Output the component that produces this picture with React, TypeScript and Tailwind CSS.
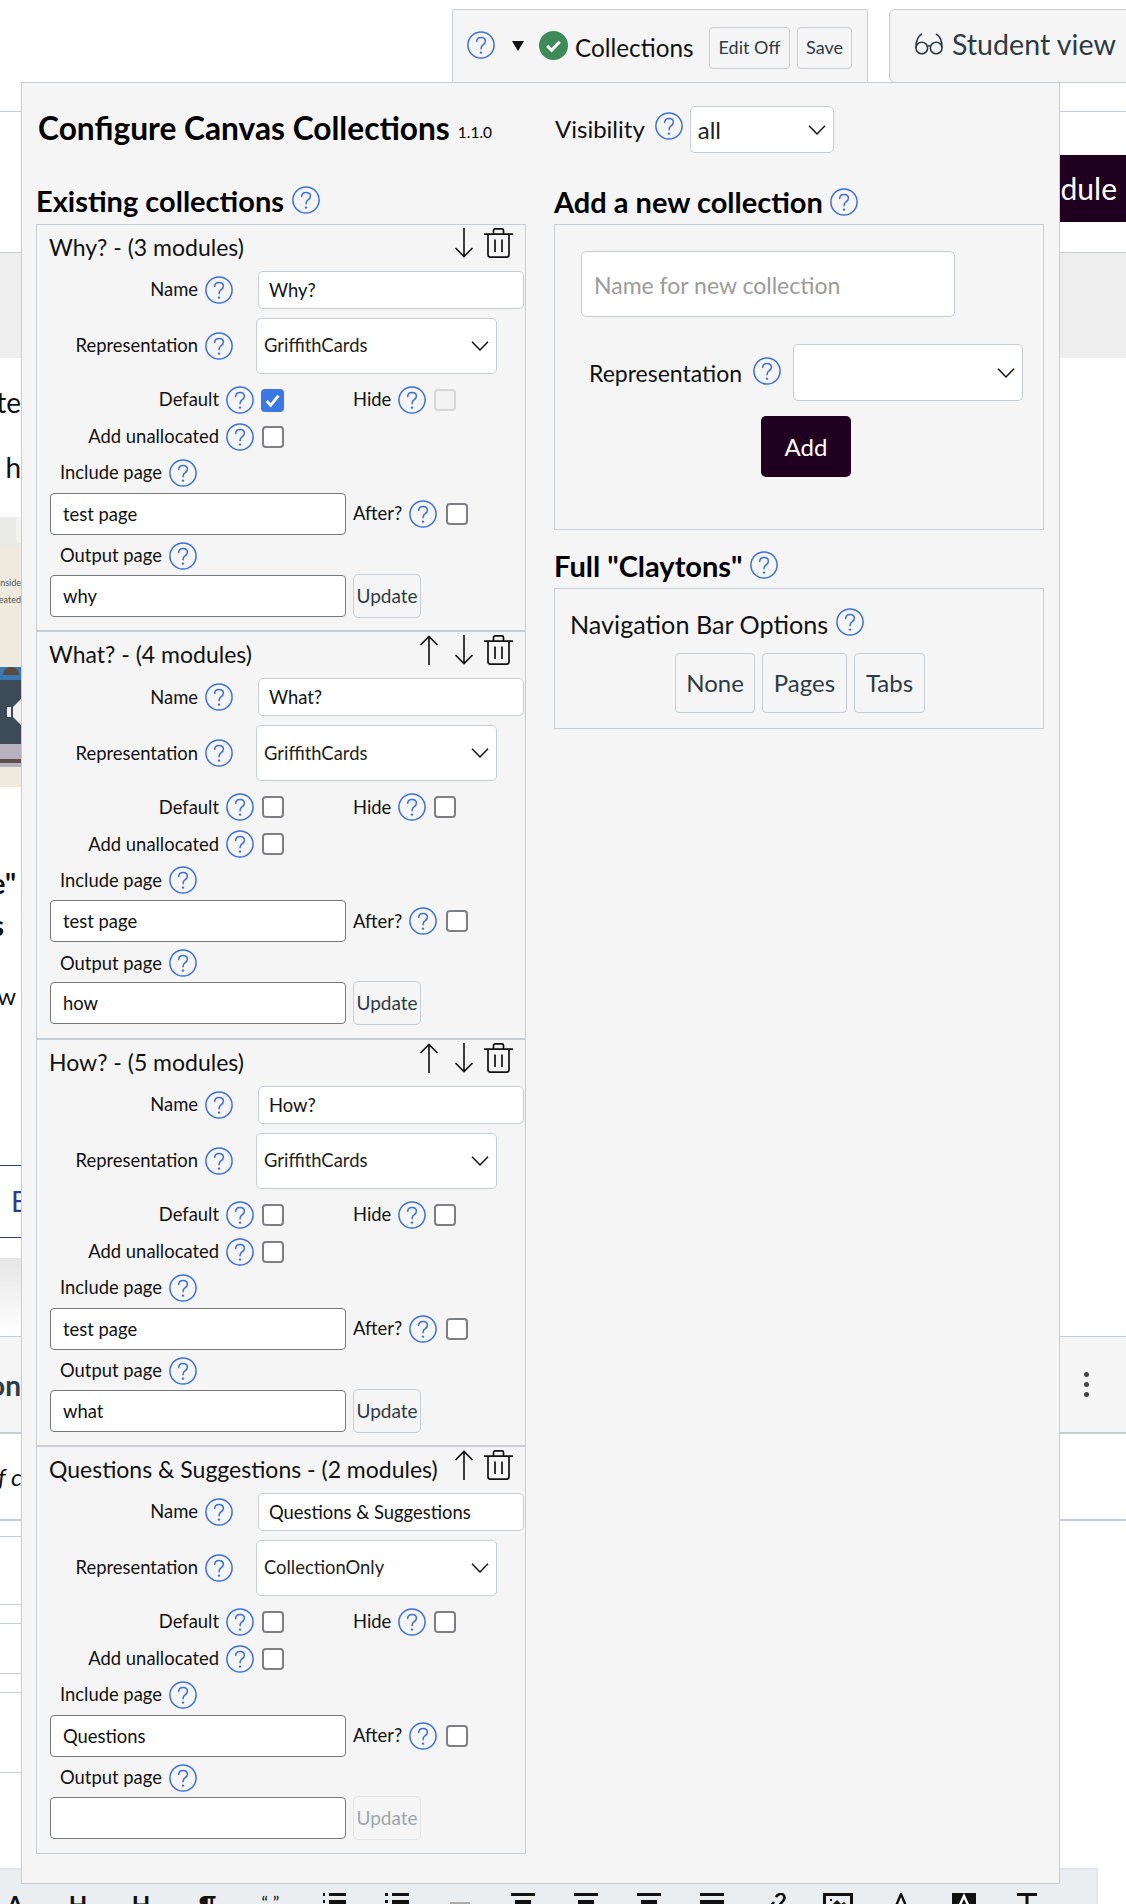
import { ReactNode } from "react";

const BORDER = "border-[#c7cdd1]";

function Help({ className = "" }: { className?: string }) {
  return (
    <svg viewBox="0 0 28 28" className={`w-[28px] h-[28px] shrink-0 text-[#3b6fdc] ${className}`} fill="none" stroke="currentColor">
      <circle cx="14" cy="14" r="13.1" strokeWidth="1.5" />
      <path d="M9.7 10.6c0-2.6 1.9-4.2 4.4-4.2s4.3 1.6 4.3 3.8c0 1.9-1.1 2.8-2.4 3.7-1.3.9-1.9 1.6-1.9 3.3v.6" strokeWidth="1.5" strokeLinecap="round" />
      <circle cx="14" cy="21.6" r="1.2" fill="currentColor" stroke="none" />
    </svg>
  );
}

function Chevron() {
  return (
    <svg viewBox="0 0 18 11" className="absolute top-1/2 -translate-y-1/2 right-[8px] w-[18px] h-[11px] pointer-events-none" fill="none" stroke="#111" strokeWidth="1.5">
      <path d="M1 1.2 9 9.4l8-8.2" />
    </svg>
  );
}

function Arrow({ up }: { up?: boolean }) {
  return (
    <svg viewBox="0 0 20 30" className={`w-[20px] h-[30px] ${up ? "rotate-180" : ""}`} fill="none" stroke="#111" strokeWidth="1.6">
      <path d="M10 0v28.5M1.5 20l8.5 8.5 8.5-8.5" />
    </svg>
  );
}

function Trash() {
  return (
    <svg viewBox="0 0 29 30" className="w-[29px] h-[30px]" fill="none" stroke="#111" strokeWidth="1.7">
      <path d="M0 6.2h29M9.5 6V2.4C9.5 1.4 10.2.9 11 .9h7c.8 0 1.5.5 1.5 1.5V6" />
      <path d="M4 6.2v20.6c0 1.4.9 2.3 2.2 2.3h16.6c1.3 0 2.2-.9 2.2-2.3V6.2" />
      <path d="M11 11.5v12.6M18 11.5v12.6" />
    </svg>
  );
}

function Check({ checked, disabled, className = "" }: { checked?: boolean; disabled?: boolean; className?: string }) {
  if (checked) {
    return (
      <span className={`w-[23px] h-[23px] rounded-[4px] bg-[#3b78e7] flex items-center justify-center shrink-0 ${className}`}>
        <svg viewBox="0 0 16 16" className="w-[17px] h-[17px]" fill="none" stroke="#fff" strokeWidth="2.6">
          <path d="M2.5 8.500 6.300 12.600 13.600 3.400" />
        </svg>
      </span>
    );
  }
  return (
    <span className={`w-[22px] h-[22px] rounded-[4px] border-2 shrink-0 ${disabled ? "border-[#d4d6d8] bg-[#f3f3f3]" : "border-[#7d7f82] bg-white"} ${className}`} />
  );
}

function Select({ value, className }: { value: string; className: string }) {
  return (
    <div className={`relative ${className}`}>
      <select
        defaultValue={value}
        className={`w-full h-full appearance-none bg-white border ${BORDER} rounded-[5px] pl-[7px] text-[#222] outline-none`}
      >
        <option value={value}>{value}</option>
      </select>
      <Chevron />
    </div>
  );
}

function PageInput({ value }: { value: string }) {
  return (
    <input
      readOnly
      value={value}
      className="w-[296px] h-[42px] bg-white border border-[#75797c] rounded-[4px] px-[12px] text-[18.4px] text-[#111] outline-none"
    />
  );
}

type Coll = {
  title: string;
  name: string;
  rep: string;
  include: string;
  output: string;
  up?: boolean;
  down?: boolean;
  isDefault?: boolean;
  disabled?: boolean;
  last?: boolean;
};

const COLLECTIONS: Coll[] = [
  { title: "Why? - (3 modules)", name: "Why?", rep: "GriffithCards", include: "test page", output: "why", down: true, isDefault: true },
  { title: "What? - (4 modules)", name: "What?", rep: "GriffithCards", include: "test page", output: "how", up: true, down: true },
  { title: "How? - (5 modules)", name: "How?", rep: "GriffithCards", include: "test page", output: "what", up: true, down: true },
  { title: "Questions & Suggestions - (2 modules)", name: "Questions & Suggestions", rep: "CollectionOnly", include: "Questions", output: "", up: true, disabled: true, last: true },
];

function Collection({ c }: { c: Coll }) {
  return (
    <div className={`h-[407.4px] ${c.last ? "" : `border-b-2 ${BORDER}`}`}>
      <div className="h-[46px] flex pl-[12px] pr-[12px]">
        <span className="text-[23px] leading-[44px] text-[#111] whitespace-nowrap flex-1">{c.title}</span>
        <div className="flex items-start pt-[3px]">
          {c.up && <Arrow up />}
          {c.down && <span className={c.up ? "ml-[15px]" : ""}><Arrow /></span>}
          <span className="ml-[10px]"><Trash /></span>
        </div>
      </div>
      <div className="h-[38px] flex items-center">
        <div className="w-[196px] flex items-center justify-end gap-[7px] text-[18.4px] text-[#111]">Name <Help /></div>
        <input
          readOnly
          value={c.name}
          className={`ml-[25px] w-[266px] h-[38px] bg-white border ${BORDER} rounded-[5px] pl-[10px] text-[18.4px] text-[#111] outline-none`}
        />
      </div>
      <div className="mt-[9px] h-[56px] flex items-center">
        <div className="w-[196px] flex items-center justify-end gap-[7px] text-[18.4px] text-[#111]">Representation <Help /></div>
        <Select value={c.rep} className="ml-[23px] w-[241px] h-[56px] text-[18.4px]" />
      </div>
      <div className="mt-[12px] h-[28px] flex items-center">
        <div className="w-[217px] flex items-center justify-end gap-[7px] text-[18.4px] text-[#111]">Default <Help /></div>
        <span className="ml-[7px] w-[23px] flex justify-center"><Check checked={c.isDefault} /></span>
        <div className="ml-[69px] flex items-center gap-[7px] text-[18.4px] text-[#111]">Hide <Help /></div>
        <Check disabled={c.isDefault} className="ml-[8px]" />
      </div>
      <div className="mt-[9px] h-[28px] flex items-center">
        <div className="w-[217px] flex items-center justify-end gap-[7px] text-[18.4px] text-[#111]">Add unallocated <Help /></div>
        <span className="ml-[7px] w-[23px] flex justify-center"><Check /></span>
      </div>
      <div className="mt-[8px] h-[28px] pl-[23px] flex items-center gap-[7px] text-[18.4px] text-[#111]">Include page <Help /></div>
      <div className="mt-[6px] h-[42px] pl-[13px] flex items-center">
        <PageInput value={c.include} />
        <span className="ml-[7px] text-[18.4px] text-[#111]">After?</span>
        <Help className="ml-[7px]" />
        <Check className="ml-[9px]" />
      </div>
      <div className="mt-[7px] h-[28px] pl-[23px] flex items-center gap-[7px] text-[18.4px] text-[#111]">Output page <Help /></div>
      <div className="mt-[5px] h-[42px] pl-[13px] flex items-center">
        <PageInput value={c.output} />
        <button
          className={`ml-[7px] w-[68px] h-[44px] rounded-[5px] border text-[19px] bg-[#f5f5f5] ${
            c.disabled ? "border-[#e1e3e4] text-[#9ea6ad]" : `${BORDER} text-[#2d3b45]`
          }`}
        >
          Update
        </button>
      </div>
    </div>
  );
}

function GreyButton({ w, h = "h-[60px]", size = "text-[24px]", children }: { w: string; h?: string; size?: string; children: ReactNode }) {
  return (
    <button className={`${w} ${h} ${size} bg-[#f5f5f5] border ${BORDER} rounded-[4px] text-[#2d3b45]`}>{children}</button>
  );
}

function Modal() {
  return (
    <div className={`absolute left-[21px] top-[82px] w-[1039px] h-[1802px] bg-[#f5f5f5] border ${BORDER} flex`}>
      <div className="w-[505px] pl-[14px] shrink-0">
        <div className="h-[92px] pl-[2px] flex items-center text-black whitespace-nowrap">
          <span className="text-[31.700px] font-bold">Configure Canvas Collections</span>
          <span className="ml-[8px] mt-[7px] text-[15.500px]">1.1.0</span>
        </div>
        <div className="mt-[5px] mb-[3px] h-[41px] flex items-center gap-[8px]">
          <span className="text-[29px] font-bold text-black">Existing collections</span>
          <Help className="-mt-[1px]" />
        </div>
        <div className={`w-[490px] h-[1630px] border ${BORDER}`}>
          {COLLECTIONS.map((c) => (
            <Collection key={c.title} c={c} />
          ))}
        </div>
      </div>
      <div className="ml-[27px] w-[490px] shrink-0">
        <div className="pt-[23px] h-[92px] flex items-start">
          <div className="h-[46px] flex items-center gap-[9px] text-[24px] text-[#111]">
            <span className="pl-[1px]">Visibility</span>
            <Help className="-mt-[6px] ml-[1px]" />
          </div>
          <Select value="all" className="ml-[7px] w-[144px] h-[47px] text-[24px]" />
        </div>
        <div className="mt-[6px] mb-[2px] h-[41px] flex items-center gap-[7px]">
          <span className="text-[29px] font-bold text-black">Add a new collection</span>
          <Help />
        </div>
        <div className={`h-[306px] border ${BORDER}`}>
          <input
            readOnly
            placeholder="Name for new collection"
            className={`block mt-[26px] ml-[26px] w-[374px] h-[66px] bg-white border ${BORDER} rounded-[5px] pl-[12px] pt-[2px] text-[23px] placeholder:text-[#9b9b9b] outline-none`}
          />
          <div className="mt-[27px] h-[57px] flex items-center">
            <span className="ml-[34px] mt-[2px] w-[153px] text-[23px] text-[#111] whitespace-nowrap">Representation</span>
            <Help className="ml-[11px] -mt-[4px]" />
            <Select value="" className="ml-[12px] w-[230px] h-[57px] text-[24px]" />
          </div>
          <button className="block mt-[15px] ml-[206px] w-[90px] h-[61px] rounded-[5px] bg-[#1f0021] text-white text-[24px]">Add</button>
        </div>
        <div className="mt-[15px] mb-[1px] h-[42px] flex items-center gap-[7px]">
          <span className="text-[29px] font-bold text-black">Full "Claytons"</span>
          <Help className="-mt-[3px]" />
        </div>
        <div className={`h-[141px] border ${BORDER}`}>
          <div className="mt-[20px] h-[28px] pl-[15px] flex items-center gap-[8px] text-[25.200px] text-[#111]">
            <span className="mt-[3px]">Navigation Bar Options</span>
            <Help className="-mt-[2px]" />
          </div>
          <div className="mt-[16px] ml-[120px] flex gap-[7px]">
            <GreyButton w="w-[80px]">None</GreyButton>
            <GreyButton w="w-[85px]">Pages</GreyButton>
            <GreyButton w="w-[71px]">Tabs</GreyButton>
          </div>
        </div>
      </div>
    </div>
  );
}

function TopBar() {
  return (
    <div className={`h-[112px] border-b ${BORDER}`}>
      <div className="pt-[9px] pl-[452px] flex items-start">
        <div className={`w-[416px] h-[74px] shrink-0 bg-[#f5f5f5] border ${BORDER} rounded-t-[3px] flex items-center`}>
          <Help className="ml-[14px] -mt-[2px]" />
          <svg viewBox="0 0 12 10" className="ml-[17px] w-[12px] h-[10px] -mt-[1px]"><path d="M0 0h12L6 10z" fill="#111" /></svg>
          <svg viewBox="0 0 28 28" className="ml-[15px] w-[29px] h-[29px] -mt-[2px]">
            <circle cx="14" cy="14" r="14" fill="#3d8b57" />
            <path d="M8 14.400l4.200 4.200 7.800-8.200" fill="none" stroke="#fff" strokeWidth="3" />
          </svg>
          <span className="ml-[7px] mt-[4px] text-[24.300px] text-[#111] w-[134px] whitespace-nowrap">Collections</span>
          <div className="flex gap-[7px] mt-[3px]">
            <GreyButton w="w-[81px]" h="h-[42px]" size="text-[18px]">Edit Off</GreyButton>
            <GreyButton w="w-[55px]" h="h-[42px]" size="text-[18px]">Save</GreyButton>
          </div>
        </div>
        <div className={`ml-[21px] w-[260px] h-[74px] shrink-0 bg-[#f5f5f5] border ${BORDER} rounded-[6px] rounded-br-none flex items-center text-[#2d3b45]`}>
          <svg viewBox="0 0 28 22" className="ml-[25px] w-[28px] h-[22px] -mt-[4px]" fill="none" stroke="currentColor" strokeWidth="1.6">
            <circle cx="6.800" cy="15" r="5.800" />
            <circle cx="21.200" cy="15" r="5.800" />
            <path d="M12.200 13.500c1.200-1 2.400-1 3.600 0M1 15C1 8 2.500 3 7 1M27 15c0-7-1.500-12-6-14" />
          </svg>
          <span className="ml-[9px] text-[28.600px] whitespace-nowrap -mt-[4px]">Student view</span>
        </div>
      </div>
    </div>
  );
}

function ImageStrip() {
  return (
    <div className="w-[21px] h-[270px] overflow-hidden bg-[#eeeade] flex flex-col">
      <div className="h-[29px] bg-[#e9e9e7] pl-[16px]"><div className="h-[26px] bg-[#f3f3f2] rounded-l-[4px]" /></div>
      <div className="mt-[28px] h-[17px] text-[9px] leading-[17px] text-[#555] flex justify-end whitespace-nowrap">nside</div>
      <div className="h-[17px] text-[9px] leading-[17px] text-[#555] flex justify-end whitespace-nowrap">eated</div>
      <div className="mt-[59px] h-[13px] bg-[#3b78b0] flex justify-center"><div className="w-[16px] h-[8px] bg-[#5c4a3e] rounded-t-full" /></div>
      <div className="h-[64px] bg-[#3d4a58] flex items-center pl-[7px]">
        <svg viewBox="0 0 14 26" className="w-[14px] h-[26px]"><path d="M0 8h4v10H0zM6 8l8-8v26l-8-8z" fill="#f1f1f1" /></svg>
      </div>
      <div className="h-[23px] bg-[#b8b2c0] flex flex-col justify-end"><div className="h-[4px] mb-[4px] bg-[#5a5148]" /></div>
    </div>
  );
}

function Edge({ children, className = "" }: { children: ReactNode; className?: string }) {
  return <div className={`w-[21px] flex justify-end whitespace-nowrap ${className}`}>{children}</div>;
}

const ALIGN_BARS = (
  <svg viewBox="0 0 24 24" className="w-[24px] h-[24px]"><path d="M0 0h24v3H0zM4 7h16v4H4z" fill="#111" /></svg>
);

const TOOLS: ReactNode[] = [
  <span className="text-[24px] font-bold leading-[24px]">A<sub className="text-[12px]">2</sub></span>,
  <span className="text-[24px] font-bold leading-[24px]">H<sub className="text-[12px]">1</sub></span>,
  <span className="text-[24px] font-bold leading-[24px]">H<sub className="text-[12px]">2</sub></span>,
  <span className="text-[24px] font-bold leading-[24px]">¶</span>,
  <span className="text-[18px] leading-[18px]">“ ”</span>,
  <svg viewBox="0 0 24 24" className="w-[24px] h-[24px]"><path d="M7 0h17v3H7zM7 7h17v4H7zM1 0h2v3H1zM1 7h2v3H1z" fill="#111" /></svg>,
  <svg viewBox="0 0 24 24" className="w-[24px] h-[24px]"><path d="M7 0h17v3H7zM7 7h17v4H7zM0 0h3v3H0zM0 7h3v3H0z" fill="#111" /></svg>,
  <div className="mt-[9px] w-[20px] h-[2px] bg-[#aaa]" />,
  ALIGN_BARS,
  ALIGN_BARS,
  ALIGN_BARS,
  <svg viewBox="0 0 24 24" className="w-[24px] h-[24px]"><path d="M0 0h24v3H0zM0 7h24v4H0z" fill="#111" /></svg>,
  <svg viewBox="0 0 24 24" className="w-[24px] h-[24px]" fill="none" stroke="#111" strokeWidth="2.600"><path d="M13 4c2-3 5-4 7-2.500s2 4 0 6.500l-6 7M11 9l-6 7-3 4" /></svg>,
  <svg viewBox="0 0 30 24" className="w-[30px] h-[24px]" fill="none"><rect x="1.500" y="1.500" width="27" height="24" stroke="#111" strokeWidth="3" /><path d="M7 6h2v2H7zM9 12l5-5 4 4 3-2 3 3H9z" fill="#111" /></svg>,
  <svg viewBox="0 0 24 24" className="w-[24px] h-[24px]" fill="none" stroke="#111" strokeWidth="2.400"><path d="M7 13 12 1l5 12" /></svg>,
  <svg viewBox="0 0 24 24" className="w-[24px] h-[24px]"><rect width="24" height="24" fill="#111" /><path d="M7 14 12 3l5 11" fill="none" stroke="#fff" strokeWidth="2.400" /></svg>,
  <svg viewBox="0 0 24 24" className="w-[24px] h-[24px]"><path d="M2 0h20v3h-8.500v21h-3V3H2z" fill="#111" /></svg>,
];

function Toolbar() {
  return (
    <div className="w-[1111px] h-[36px] bg-[#ebeef0] border-t-2 border-r-2 border-[#e4e6e7] flex overflow-hidden pt-[23px] -ml-[13px] text-[#111]">
      {TOOLS.map((t, i) => (
        <div key={i} className="w-[63px] shrink-0 flex justify-center">{t}</div>
      ))}
    </div>
  );
}

function Background() {
  return (
    <div className="text-[28px] text-[#111]">
      <TopBar />
      <div className="h-[140px] pt-[43px] flex justify-end">
        <button className="w-[200px] h-[67px] bg-[#1f0021] text-white text-[30px] text-right pr-[9px]">Module</button>
      </div>
      <div className={`h-[106px] bg-[#eeeeee] border-t ${BORDER}`} />
      <div className="h-[159px] pt-[26px]">
        <Edge className="h-[36px] leading-[36px]">te</Edge>
        <Edge className="mt-[29px] h-[36px] leading-[36px]">h</Edge>
      </div>
      <ImageStrip />
      <div className="h-[378px] pt-[78px] font-bold">
        <Edge className="h-[36px] leading-[36px] pr-[5px]">e"</Edge>
        <Edge className="mt-[6px] h-[36px] leading-[36px] pr-[17px]">s</Edge>
        <Edge className="mt-[35px] h-[36px] leading-[36px] font-normal text-[24px] pr-[5px]">w</Edge>
      </div>
      <div className="w-[21px] h-[73px] border-y border-[#2d3b8f] overflow-hidden pl-[11px] text-[#2c3e8c] leading-[71px]">E</div>
      <div className="h-[20px]" />
      <div className="w-[21px] h-[78px] bg-gradient-to-b from-[#e6e6e6] to-white" />
      <div className={`h-[98px] bg-[#f5f5f5] border-t ${BORDER} border-b-2 flex items-center justify-between`}>
        <Edge className="font-bold"><span className="text-[#2d3b45]">on</span></Edge>
        <div className="flex flex-col gap-[5px] mr-[37px]">
          <span className="w-[5px] h-[5px] rounded-full bg-[#444]" />
          <span className="w-[5px] h-[5px] rounded-full bg-[#444]" />
          <span className="w-[5px] h-[5px] rounded-full bg-[#444]" />
        </div>
      </div>
      <div className={`h-[87px] border-b-2 ${BORDER} flex items-center`}>
        <span className="-ml-[2px] italic text-[24px] whitespace-nowrap">f co</span>
      </div>
      <div className={`w-[21px] h-[16px] border-b ${BORDER}`} />
      <div className={`w-[21px] h-[68px] border-b ${BORDER}`} />
      <div className={`w-[21px] h-[19px] border-b ${BORDER}`} />
      <div className={`w-[21px] h-[50px] border-b ${BORDER}`} />
      <div className={`w-[21px] h-[19px] border-b ${BORDER}`} />
      <div className={`w-[21px] h-[80px] border-b ${BORDER}`} />
      <div className="h-[95px]" />
      <Toolbar />
    </div>
  );
}

export default function App() {
  return (
    <div className="relative w-[1126px] h-[1904px] overflow-hidden bg-white [font-family:Lato,sans-serif]">
      <Background />
      <Modal />
    </div>
  );
}
